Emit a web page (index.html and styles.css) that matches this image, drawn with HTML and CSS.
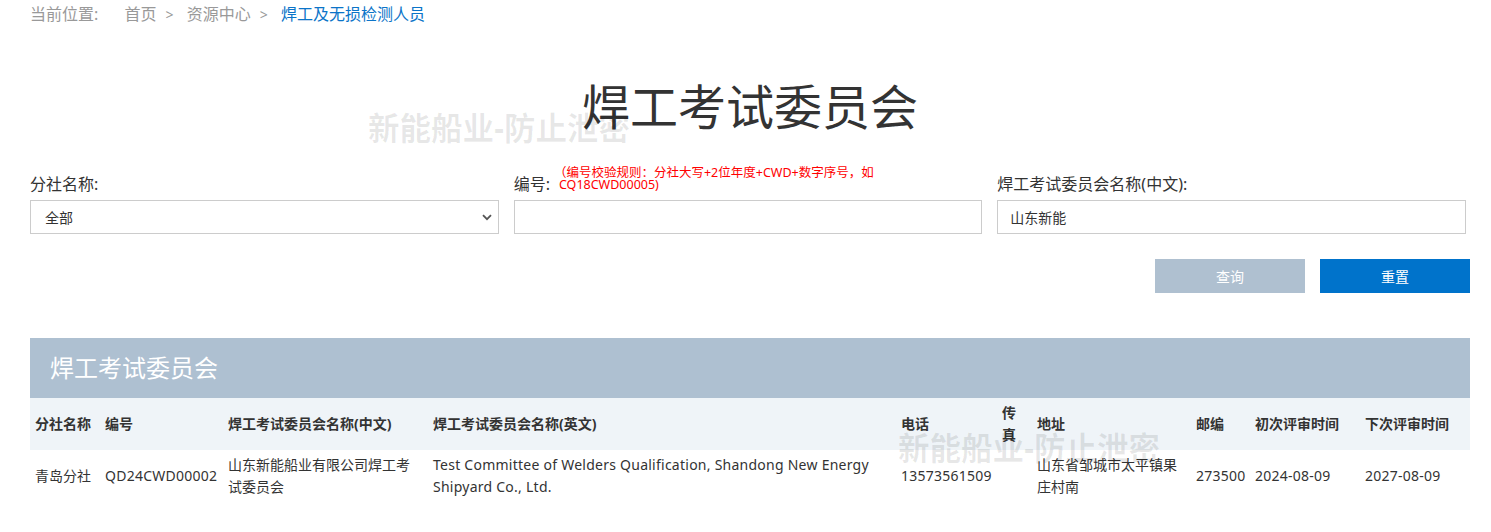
FILE: index.html
```html
<!DOCTYPE html>
<html lang="zh-CN">
<head>
    <meta charset="UTF-8">
    <title>焊工考试委员会</title>
    <link rel="stylesheet" href="styles.css">
</head>
<body>
    <!-- 面包屑 -->
    <div class="crumbs">
        <span class="crumbs-label">当前位置:</span>
        <span>首页</span><span class="sep">&gt;</span>
        <span>资源中心</span><span class="sep">&gt;</span>
        <span class="active">焊工及无损检测人员</span>
    </div>

    <h1 class="page-title">焊工考试委员会</h1>

    <!-- 查询表单 -->
    <div class="search-form">
        <div class="field">
            <label class="field-label">分社名称:</label>
            <div class="select-wrap">
                <select class="field-input">
                    <option>全部</option>
                </select>
                <svg class="select-arrow" width="10" height="7" viewBox="0 0 10 7"><path d="M1 1.2 L5 5.2 L9 1.2" fill="none" stroke="#555" stroke-width="1.8"/></svg>
            </div>
        </div>
        <div class="field">
            <label class="field-label">编号:<span class="rule">（编号校验规则：分社大写+2位年度+CWD+数字序号，如CQ18CWD00005)</span></label>
            <input class="field-input" type="text">
        </div>
        <div class="field">
            <label class="field-label">焊工考试委员会名称(中文):</label>
            <input class="field-input" type="text" value="山东新能">
        </div>
    </div>

    <div class="actions">
        <button class="btn btn-query">查询</button>
        <button class="btn btn-reset">重置</button>
    </div>

    <!-- 结果列表 -->
    <div class="result">
        <div class="result-title">焊工考试委员会</div>
        <table class="result-table">
            <colgroup>
                <col style="width:70px"><col style="width:123px"><col style="width:205px"><col style="width:468px"><col style="width:101px">
                <col style="width:35px"><col style="width:159px"><col style="width:59px"><col style="width:110px"><col style="width:110px">
            </colgroup>
            <thead>
                <tr>
                    <th>分社名称</th>
                    <th>编号</th>
                    <th>焊工考试委员会名称(中文)</th>
                    <th>焊工考试委员会名称(英文)</th>
                    <th>电话</th>
                    <th>传真</th>
                    <th>地址</th>
                    <th>邮编</th>
                    <th>初次评审时间</th>
                    <th>下次评审时间</th>
                </tr>
            </thead>
            <tbody>
                <tr>
                    <td>青岛分社</td>
                    <td class="num">QD24CWD00002</td>
                    <td>山东新能船业有限公司焊工考试委员会</td>
                    <td class="num">Test Committee of Welders Qualification, Shandong New Energy Shipyard Co., Ltd.</td>
                    <td class="num">13573561509</td>
                    <td></td>
                    <td>山东省邹城市太平镇果庄村南</td>
                    <td class="num">273500</td>
                    <td class="num">2024-08-09</td>
                    <td class="num">2027-08-09</td>
                </tr>
            </tbody>
        </table>
    </div>

    <!-- 水印 -->
    <div class="watermark wm-1">新能船业-防止泄密</div>
    <div class="watermark wm-2">新能船业-防止泄密</div>
</body>
</html>
```

FILE: styles.css
```css
/* 基础 */
body {
    margin: 0;
    padding: 0 21px 0 30px;
    font-family: "Noto Sans", "Noto Sans CJK SC", sans-serif;
    color: #333;
    background: #fff;
    position: relative;
}

/* 面包屑 */
.crumbs {
    height: 28px;
    line-height: 28px;
    font-size: 16px;
    color: #999;
}

.crumbs-label {
    margin-right: 22px;
}

.crumbs .sep {
    margin: 0 9px;
    font-size: 14px;
}

.crumbs .active {
    color: #0b74c8;
}

/* 标题 */
.page-title {
    margin: 50px 0 0;
    height: 58px;
    line-height: 58px;
    text-align: center;
    font-size: 48px;
    font-weight: normal;
    color: #333;
}

/* 表单 */
.search-form {
    display: flex;
    gap: 15px;
    margin: 30px 4px 0 0;
}

.field {
    flex: 1;
    display: flex;
    flex-direction: column;
}

.field-label {
    height: 30px;
    line-height: 36px;
    font-size: 16px;
    margin-bottom: 4px;
    white-space: nowrap;
}

.rule {
    display: inline-block;
    width: 330px;
    white-space: normal;
    margin-left: 9px;
    font-size: 12.5px;
    line-height: 12px;
    color: #f00;
    vertical-align: top;
    margin-top: 1px;
    text-indent: -5px;
}

.field-input {
    box-sizing: border-box;
    width: 100%;
    height: 34px;
    border: 1px solid #ccc;
    background: #fff;
    padding: 0 12px;
    font-family: inherit;
    font-size: 14px;
    color: #333;
    outline: none;
}

.select-wrap {
    position: relative;
}

.select-wrap select {
    appearance: none;
    padding-left: 14px;
}

.select-arrow {
    position: absolute;
    right: 7px;
    top: 14px;
    pointer-events: none;
}

/* 按钮 */
.actions {
    display: flex;
    justify-content: flex-end;
    gap: 15px;
    margin-top: 25px;
}

.btn {
    width: 150px;
    height: 34px;
    border: none;
    color: #fff;
    font-family: inherit;
    font-size: 14px;
    cursor: pointer;
}

.btn-query {
    background-color: #afc0d0;
}

.btn-reset {
    background-color: #0073cb;
}

/* 列表 */
.result {
    margin-top: 45px;
}

.result-title {
    height: 60px;
    line-height: 60px;
    padding-left: 20px;
    background-color: #aec0d1;
    color: #fff;
    font-size: 24px;
}

.result-table {
    width: 100%;
    table-layout: fixed;
    border-collapse: collapse;
    font-size: 14px;
}

.result-table th,
.result-table td {
    padding: 4px 5px;
    line-height: 22px;
    text-align: left;
    vertical-align: middle;
}

.result-table thead tr {
    background-color: #eff4f8;
}

.result-table th {
    font-weight: bold;
    color: #333;
}

.result-table td {
    color: #333;
}

.result-table td.num {
    letter-spacing: 0.25px;
}

/* 水印 */
.watermark {
    position: absolute;
    font-size: 31.5px;
    font-weight: bold;
    color: rgba(0, 0, 0, 0.09);
    white-space: nowrap;
    pointer-events: none;
    line-height: 40px;
}

.wm-1 {
    left: 368px;
    top: 108px;
}

.wm-2 {
    left: 898px;
    top: 428px;
}
```
